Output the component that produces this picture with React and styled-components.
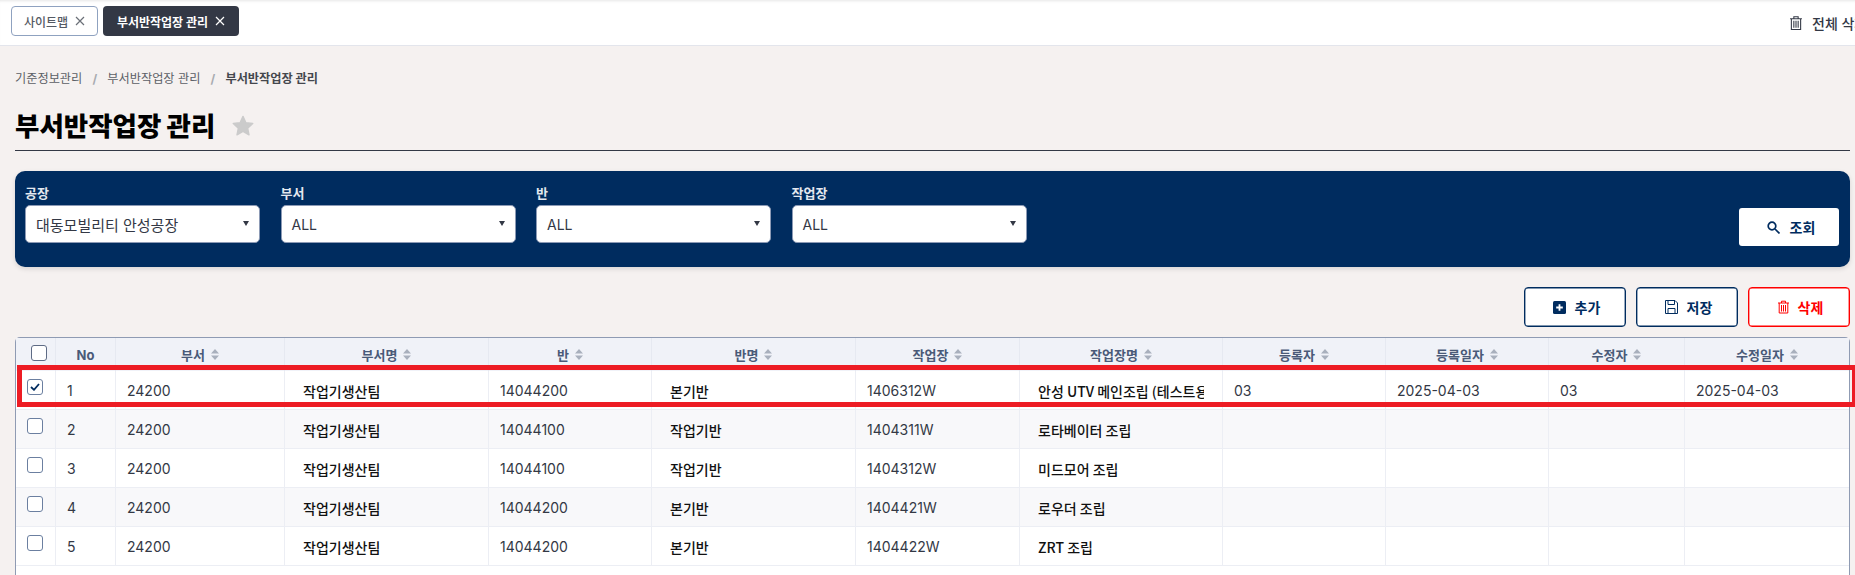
import React from "react";
import styled, { createGlobalStyle } from "styled-components";

const Global = createGlobalStyle`
  html, body { margin: 0; padding: 0; width: 1855px; height: 575px; overflow: hidden; background: #f5f1f0; }
  body, button { font-family: Inter, "Noto Sans CJK KR", "Noto Sans", sans-serif; }
  * { box-sizing: border-box; }
`;
const Page = styled.div`width: 1855px; height: 575px; overflow: hidden; display: flex; flex-direction: column;`;
const TopBar = styled.header`
  height: 46px; flex: none; background: #fff; border-bottom: 1px solid #e3e5ec;
  box-shadow: inset 0 3px 3px -2px rgba(0,0,0,.1);
  display: flex; align-items: flex-start; padding: 6px 0 0 11px; gap: 5px; overflow: hidden;
`;
const Tab = styled.div`
  height: 30px; border-radius: 4px; display: flex; align-items: center; justify-content: center; gap: 7px;
  font-size: 12px; white-space: nowrap; width: ${p => p.$w}px;
  font-weight: ${p => p.$active ? 700 : 500};
  background: ${p => p.$active ? "#333845" : "#fff"};
  color: ${p => p.$active ? "#fff" : "#555a64"};
  border: ${p => p.$active ? "none" : "1px solid #8fa2c0"};
`;
const ClearAll = styled.div`
  margin-left: auto; margin-right: -20px; flex: none; margin-top: 7px;
  display: flex; align-items: center; gap: 10px; font-size: 14px; font-weight: 500; color: #333845; white-space: nowrap; width: 85px;
`;
const Content = styled.main`flex: 1; padding: 0 5px 0 15px; display: flex; flex-direction: column; min-height: 0;`;
const Crumbs = styled.nav`margin-top: 25px; height: 16px; display: flex; align-items: center; font-size: 12.2px; line-height: 16px; color: #5c5f66;`;
const Crumb = styled.span`font-weight: ${p => p.$current ? 700 : 400}; color: ${p => p.$current ? "#44474d" : "#5c5f66"};`;
const Slash = styled.span`width: 25px; text-align: center; color: #a8abb0; font-weight: 700;`;
const TitleRow = styled.div`
  margin-top: 20px; height: 44px; padding-bottom: 6px; border-bottom: 1px solid #333845; display: flex; align-items: center; gap: 17px;
`;
const Title = styled.h1`margin: 0; font-size: 26.5px; line-height: 36px; font-weight: 900; color: #000;`;
const Panel = styled.section`
  margin-top: 20px; height: 96px; background: #002c5f; border-radius: 10px; box-shadow: 0 2px 5px rgba(0,0,0,.12);
  padding: 15px 11px 0 10px; display: flex; align-items: flex-start; gap: 20.5px;
`;
const Field = styled.div`width: 235px; display: flex; flex-direction: column;`;
const FieldLabel = styled.label`height: 19px; font-size: 13px; line-height: 15px; font-weight: 700; color: #e4e8ef;`;
const Select = styled.div`
  height: 38px; background: #fff; border: 1px solid #8c9ab5; border-radius: 5px; display: flex; align-items: center; justify-content: space-between;
  padding: 0 10px 0 10px; font-size: ${p => p.$ko ? 15 : 14}px; color: #333845;
`;
const Caret = styled.span`width: 0; height: 0; border-left: 3px solid transparent; border-right: 3px solid transparent; border-top: 5px solid #333845; margin-bottom: 2px;`;
const SearchButton = styled.button`
  margin: 22px 0 0 auto; width: 100px; height: 38px; background: #fff; border: none; border-radius: 3px; color: #002c5f;
  font-size: 14px; font-weight: 700; display: flex; align-items: center; justify-content: center; gap: 10px; padding: 0 0 0 4px;
`;
const Actions = styled.div`margin-top: 20px; display: flex; justify-content: flex-end; gap: 10px;`;
const ActionButton = styled.button`
  width: 102px; height: 40px; background: #fff; border-radius: 4px; border: 1px solid ${p => p.$danger ? "#ff0000" : "#002c5f"};
  box-shadow: inset 0 0 0 .4px ${p => p.$danger ? "#ff0000" : "#002c5f"};
  color: ${p => p.$danger ? "#ff0000" : "#002c5f"}; font-size: 14px; font-weight: 700;
  display: flex; align-items: center; justify-content: center; gap: 9px; padding: 0 0 0 3px;
`;
const TableWrap = styled.div`
  position: relative; margin-top: 10px; flex: 1; background: #fff; border: 1px solid #8f9bb3; border-bottom: none; border-radius: 5px 5px 0 0;
`;
const Grid = styled.table`width: 1833px; table-layout: fixed; border-collapse: separate; border-spacing: 0;`;
const Th = styled.th`
  height: 33px; padding: 0; background: #f0f2f8; border-right: 1px solid #e6e9f1; color: #4a5a78; font-size: 13px; font-weight: 700; text-align: center;
  &:last-child { border-right: none; }
`;
const ThInner = styled.span`display: inline-flex; align-items: center; gap: 6px;`;
const Td = styled.td`
  height: 39px; padding: ${p => p.$name ? "1px 18px 0" : `0 ${p.$pad ?? 11}px`}; font-size: 14px; font-weight: ${p => p.$name ? 500 : 400};
  color: ${p => p.$name ? "#111" : "#333845"}; background: ${p => p.$odd ? "#f8f8fa" : "#fff"};
  font-family: ${p => p.$name ? '"Noto Sans CJK KR", sans-serif' : "inherit"};
  border-right: 1px solid #eceef4; border-bottom: 1px solid #eceef4; white-space: nowrap; overflow: hidden;
  &:last-child { border-right: none; }
`;
const Clip = styled.div`overflow: hidden; white-space: nowrap;`;
const Check = styled.div`
  width: 16px; height: 16px; border: 1px solid ${p => p.$head ? "#5e6b85" : "#6b7fa0"}; border-radius: 3px; background: #fff;
  display: flex; align-items: center; justify-content: center; margin: ${p => p.$head ? "0 0 4px 15px" : "0 0 6px 11px"};
`;
const Highlight = styled.div`
  position: absolute; left: 1px; top: 27px; width: 1840px; height: 42px; border: 5px solid #ed1c24; pointer-events: none;
`;

const Close = ({ c }) => (
  <svg width="10" height="10" viewBox="0 0 10 10"><path d="M1 1l8 8M9 1l-8 8" stroke={c} strokeWidth="1.2" fill="none" /></svg>
);
const Trash = ({ c, w = 11, h = 13 }) => (
  <svg width={w} height={h} viewBox="0 0 11 13" fill="none" stroke={c} strokeWidth="1">
    <path d="M0 2.500h11M3.500 2.500V.7h4v1.800M1.200 2.500v10h8.600v-10M3.500 4.500v6.500M5.500 4.500v6.500M7.500 4.500v6.500" />
  </svg>
);
const Star = () => (
  <svg width="22" height="21" viewBox="0 0 24 23"><path d="M12 1.500l3.200 6.900 7.500.9-5.600 5.100 1.500 7.400L12 17.900l-6.600 3.900 1.500-7.400L1.300 9.300l7.500-.9z" fill="#cbcbcb" stroke="#cbcbcb" strokeWidth="1.500" strokeLinejoin="round" /></svg>
);
const SearchIcon = () => (
  <svg width="13" height="13" viewBox="0 0 13 13" fill="none" stroke="#002c5f" strokeWidth="1.700"><circle cx="5" cy="5" r="3.800" /><path d="M8 8l4.500 4.500" /></svg>
);
const AddIcon = () => (
  <svg width="13" height="13" viewBox="0 0 13 13"><rect width="13" height="13" rx="1.500" fill="#002c5f" /><path d="M6.500 3.200v6.600M3.200 6.500h6.600" stroke="#fff" strokeWidth="1.800" /></svg>
);
const SaveIcon = () => (
  <svg width="13" height="14" viewBox="0 0 13 14" fill="none" stroke="#002c5f" strokeWidth="1"><path d="M.5.5h9.500l2.500 2.500v10.500H.5zM3 .5v4h6.500v-4M3 13.500v-5h7v5" /></svg>
);
const Sort = () => (
  <svg width="8" height="11" viewBox="0 0 8 11"><path d="M4 0l4 4.500H0zM4 11l4-4.500H0z" fill="#a9b0bd" /></svg>
);
const Tick = () => (
  <svg width="10" height="8" viewBox="0 0 10 8" fill="none"><path d="M1 4l3 2.800L9 1" stroke="#002c5f" strokeWidth="1.800" /></svg>
);

const widths = [40, 60, 169, 204, 163, 204, 164, 203, 163, 163, 136, 164];
const heads = ["부서", "부서명", "반", "반명", "작업장", "작업장명", "등록자", "등록일자", "수정자", "수정일자"];
const rows = [
  ["1", "24200", "작업기생산팀", "14044200", "본기반", "1406312W", "안성 UTV 메인조립 (테스트용)", "03", "2025-04-03", "03", "2025-04-03"],
  ["2", "24200", "작업기생산팀", "14044100", "작업기반", "1404311W", "로타베이터 조립", "", "", "", ""],
  ["3", "24200", "작업기생산팀", "14044100", "작업기반", "1404312W", "미드모어 조립", "", "", "", ""],
  ["4", "24200", "작업기생산팀", "14044200", "본기반", "1404421W", "로우더 조립", "", "", "", ""],
  ["5", "24200", "작업기생산팀", "14044200", "본기반", "1404422W", "ZRT 조립", "", "", "", ""],
];
const nameCols = new Set([2, 4, 6]);
const filters = [["공장", "대동모빌리티 안성공장"], ["부서", "ALL"], ["반", "ALL"], ["작업장", "ALL"]];

export default function App() {
  return (
    <Page>
      <Global />
      <TopBar>
        <Tab $w={87}>사이트맵 <Close c="#6b7078" /></Tab>
        <Tab $w={136} $active>부서반작업장 관리 <Close c="#fff" /></Tab>
        <ClearAll><Trash c="#333845" w={12} h={14} />전체 삭제</ClearAll>
      </TopBar>
      <Content>
        <Crumbs>
          <Crumb>기준정보관리</Crumb><Slash>/</Slash>
          <Crumb>부서반작업장 관리</Crumb><Slash>/</Slash>
          <Crumb $current>부서반작업장 관리</Crumb>
        </Crumbs>
        <TitleRow><Title>부서반작업장 관리</Title><Star /></TitleRow>
        <Panel>
          {filters.map(([l, v]) => (
            <Field key={l}>
              <FieldLabel>{l}</FieldLabel>
              <Select $ko={v !== "ALL"}>{v}<Caret /></Select>
            </Field>
          ))}
          <SearchButton><SearchIcon />조회</SearchButton>
        </Panel>
        <Actions>
          <ActionButton><AddIcon />추가</ActionButton>
          <ActionButton><SaveIcon />저장</ActionButton>
          <ActionButton $danger><Trash c="#ff0000" w={11} h={14} />삭제</ActionButton>
        </Actions>
        <TableWrap>
          <Grid>
            <colgroup>{widths.map((w, i) => <col key={i} style={{ width: w }} />)}</colgroup>
            <thead>
              <tr>
                <Th><Check $head /></Th>
                <Th>No</Th>
                {heads.map(h => <Th key={h}><ThInner>{h}<Sort /></ThInner></Th>)}
              </tr>
            </thead>
            <tbody>
              {rows.map((r, i) => (
                <tr key={r[0]}>
                  <Td $odd={i % 2 === 1} $pad={0}><Check>{i === 0 && <Tick />}</Check></Td>
                  {r.map((c, j) => (
                    <Td key={j} $odd={i % 2 === 1} $name={nameCols.has(j)}>
                      {nameCols.has(j) ? <Clip>{c}</Clip> : c}
                    </Td>
                  ))}
                </tr>
              ))}
            </tbody>
          </Grid>
          <Highlight />
        </TableWrap>
      </Content>
    </Page>
  );
}
